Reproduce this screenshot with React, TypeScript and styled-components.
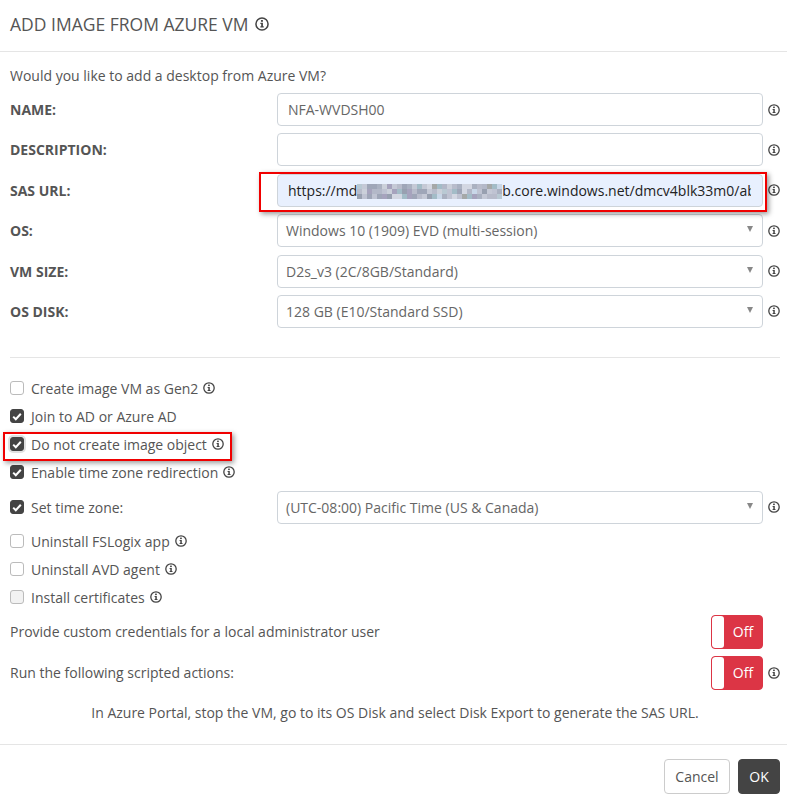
import React from "react";
import styled, { createGlobalStyle } from "styled-components";

const GlobalStyle = createGlobalStyle`
  html, body {
    margin: 0;
    padding: 0;
    background: #fff;
  }
  body {
    font-family: "Open Sans", "Liberation Sans", sans-serif;
    font-size: 14px;
    color: #555;
  }
`;

const Dialog = styled.div`
  position: relative;
  width: 787px;
  height: 806px;
  overflow: hidden;
  background: #fff;
`;

const Header = styled.div`
  height: 52px;
  box-sizing: border-box;
  padding: 0 0 3px 10px;
  display: flex;
  align-items: center;
  gap: 6px;
  border-bottom: 1px solid #e5e5e5;
  font-size: 17.5px;
  color: #555;
`;

const Body = styled.div`
  padding: 13px 7px 0 10px;
`;

const Intro = styled.div`
  height: 28px;
  line-height: 22px;
`;

const FieldRow = styled.div`
  height: 40.4px;
  display: grid;
  grid-template-columns: 267px 486px 23px;
  align-items: start;
`;

const FieldLabel = styled.div`
  height: 33px;
  display: flex;
  align-items: center;
  font-weight: 700;
  color: #555;
`;

const TextBox = styled.div<{ $active?: boolean }>`
  height: 33px;
  box-sizing: border-box;
  padding: 0 11px 0 10px;
  display: flex;
  align-items: center;
  border: 1px solid #ced4da;
  border-radius: 4px;
  background: ${(p) => (p.$active ? "#e8f0fe" : "#fff")};
  color: ${(p) => (p.$active ? "#222" : "#666")};
`;

const TextClip = styled.span`
  flex: 1;
  min-width: 0;
  display: flex;
  align-items: center;
  white-space: nowrap;
  overflow: hidden;
`;

const Mosaic = styled.span`
  display: inline-grid;
  flex: none;
  grid-auto-flow: column;
  grid-template-rows: repeat(3, 5px);
  grid-auto-columns: 5px;
  margin-top: 2px;
`;

const MosaicCell = styled.span<{ $color: string }>`
  background: ${(p) => p.$color};
`;

const SelectBox = styled.div`
  height: 33px;
  box-sizing: border-box;
  padding: 0 8px;
  display: flex;
  align-items: center;
  justify-content: space-between;
  border: 1px solid #ced4da;
  border-radius: 4px;
  background: #fff;
  color: #666;
`;

const Caret = styled.span`
  width: 0;
  height: 0;
  margin: 0 1px 3px 0;
  border-left: 3.5px solid transparent;
  border-right: 3.5px solid transparent;
  border-top: 6px solid #888;
`;

const IconCell = styled.div`
  height: 33px;
  padding-left: 5px;
  display: flex;
  align-items: center;
`;

const Divider = styled.div`
  height: 1px;
  background: #e5e5e5;
  margin: 22px 0 16px;
`;

const CheckRow = styled.div<{ $height?: number }>`
  height: ${(p) => p.$height ?? 28}px;
  display: flex;
  align-items: center;
  gap: 7px;
`;

const CheckRowField = styled.div`
  height: 40px;
  margin-top: 1px;
  display: grid;
  grid-template-columns: 267px 486px 23px;
  align-items: center;
`;

const CheckLabel = styled.span`
  display: inline-flex;
  align-items: center;
  gap: 5px;
`;

const CheckBox = styled.span<{ $checked?: boolean; $disabled?: boolean; $focused?: boolean }>`
  width: 14px;
  height: 14px;
  flex: none;
  box-sizing: border-box;
  display: inline-flex;
  align-items: center;
  justify-content: center;
  border-radius: 3px;
  border: 1px solid ${(p) => (p.$checked ? "#444" : "#bbb")};
  background: ${(p) => (p.$checked ? "#444" : p.$disabled ? "#f2f2f2" : "#fff")};
  box-shadow: ${(p) => (p.$focused ? "0 0 0 2px rgba(0, 0, 0, 0.12)" : "none")};
`;

const ToggleRow = styled.div`
  height: 41px;
  display: grid;
  grid-template-columns: 701px 52px 23px;
  align-items: center;
`;

const Toggle = styled.div`
  width: 52px;
  height: 34px;
  box-sizing: border-box;
  display: flex;
  border: 1px solid #dc3545;
  border-radius: 4px;
  background: #dc3545;
  overflow: hidden;
`;

const ToggleKnob = styled.span`
  width: 12px;
  background: #fff;
  border-radius: 3px;
`;

const ToggleText = styled.span`
  flex: 1;
  display: flex;
  align-items: center;
  justify-content: center;
  color: #fff;
`;

const Note = styled.div`
  height: 39px;
  display: flex;
  align-items: center;
  justify-content: center;
`;

const Footer = styled.div`
  position: absolute;
  left: 0;
  right: 0;
  top: 744px;
  padding: 14px 7px 0 0;
  display: flex;
  justify-content: flex-end;
  gap: 8px;
  border-top: 1px solid #e5e5e5;
`;

const Button = styled.button<{ $primary?: boolean }>`
  width: ${(p) => (p.$primary ? 42 : 66)}px;
  height: 35px;
  padding: 0;
  border: 1px solid ${(p) => (p.$primary ? "#444" : "#ccc")};
  border-radius: 4px;
  background: ${(p) => (p.$primary ? "#444" : "#fff")};
  color: ${(p) => (p.$primary ? "#fff" : "#555")};
  font: inherit;
`;

const Callout = styled.div<{ $x: number; $y: number; $w: number; $h: number }>`
  position: absolute;
  left: ${(p) => p.$x}px;
  top: ${(p) => p.$y}px;
  width: ${(p) => p.$w}px;
  height: ${(p) => p.$h}px;
  box-sizing: border-box;
  border: 2px solid #f00000;
  box-shadow: 2px 2px 5px rgba(0, 0, 0, 0.4);
  pointer-events: none;
`;

function InfoIcon({ size = 12 }: { size?: number }) {
  return (
    <svg width={size} height={size} viewBox="0 0 12 12" style={{ flex: "none" }}>
      <circle cx="6" cy="6" r="5.2" fill="none" stroke="#444" strokeWidth="1.3" />
      <rect x="5.1" y="2.6" width="1.7" height="1.5" fill="#444" />
      <path d="M4.6 5h2.2v2.9h.7v1H4.6v-1h.7V6h-.7z" fill="#444" />
    </svg>
  );
}

function CheckMark() {
  return (
    <svg width="10" height="9" viewBox="0 0 10 9">
      <path d="M1.2 4.6 3.8 7.2 8.8 1.8" fill="none" stroke="#fff" strokeWidth="2" />
    </svg>
  );
}

const blurPalette = [
  "#c5c9d6", "#aab1c1", "#9fa6b8", "#b9c9d3", "#a3bcc7", "#c9d7e8", "#bfc3d2",
  "#98a0b0", "#cbd0da", "#a6a3bd", "#b8bccb", "#d3d7e2", "#a5a8a8", "#b3b8c8",
];

// 3 rows x 29 columns of scrambled pixels hiding the storage account name
const blurCells = Array.from({ length: 87 }, (_, i) => {
  const noise = Math.abs(Math.sin((i + 1) * 12.9898) * 43758.5453);
  return blurPalette[Math.floor(noise) % blurPalette.length];
});

const fields = [
  { label: "NAME:", value: "NFA-WVDSH00" },
  { label: "DESCRIPTION:", value: "" },
];

const selects = [
  { label: "OS:", value: "Windows 10 (1909) EVD (multi-session)" },
  { label: "VM SIZE:", value: "D2s_v3 (2C/8GB/Standard)" },
  { label: "OS DISK:", value: "128 GB (E10/Standard SSD)" },
];

const topChecks = [
  { label: "Create image VM as Gen2", checked: false, info: true, focused: false },
  { label: "Join to AD or Azure AD", checked: true, info: false, focused: false },
  { label: "Do not create image object", checked: true, info: true, focused: true },
  { label: "Enable time zone redirection", checked: true, info: true, focused: false },
];

const bottomChecks = [
  { label: "Uninstall FSLogix app", disabled: false },
  { label: "Uninstall AVD agent", disabled: false },
  { label: "Install certificates", disabled: true },
];

export default function App() {
  return (
    <Dialog>
      <GlobalStyle />
      <Header>
        ADD IMAGE FROM AZURE VM <InfoIcon size={14} />
      </Header>
      <Body>
        <Intro>Would you like to add a desktop from Azure VM?</Intro>
        {fields.map((f) => (
          <FieldRow key={f.label}>
            <FieldLabel>{f.label}</FieldLabel>
            <TextBox>{f.value}</TextBox>
            <IconCell>
              <InfoIcon />
            </IconCell>
          </FieldRow>
        ))}
        <FieldRow>
          <FieldLabel>SAS URL:</FieldLabel>
          <TextBox $active>
            <TextClip>
              https://md
              <Mosaic>
                {blurCells.map((c, i) => (
                  <MosaicCell key={i} $color={c} />
                ))}
              </Mosaic>
              b.core.windows.net/dmcv4blk33m0/ab
            </TextClip>
          </TextBox>
          <IconCell>
            <InfoIcon />
          </IconCell>
        </FieldRow>
        {selects.map((s) => (
          <FieldRow key={s.label}>
            <FieldLabel>{s.label}</FieldLabel>
            <SelectBox>
              {s.value}
              <Caret />
            </SelectBox>
            <IconCell>
              <InfoIcon />
            </IconCell>
          </FieldRow>
        ))}
        <Divider />
        {topChecks.map((c) => (
          <CheckRow key={c.label}>
            <CheckBox $checked={c.checked} $focused={c.focused}>
              {c.checked && <CheckMark />}
            </CheckBox>
            <CheckLabel>
              {c.label}
              {c.info && <InfoIcon />}
            </CheckLabel>
          </CheckRow>
        ))}
        <CheckRowField>
          <CheckRow $height={33}>
            <CheckBox $checked>
              <CheckMark />
            </CheckBox>
            <CheckLabel>Set time zone:</CheckLabel>
          </CheckRow>
          <SelectBox>
            (UTC-08:00) Pacific Time (US &amp; Canada)
            <Caret />
          </SelectBox>
          <IconCell>
            <InfoIcon />
          </IconCell>
        </CheckRowField>
        {bottomChecks.map((c) => (
          <CheckRow key={c.label}>
            <CheckBox $disabled={c.disabled} />
            <CheckLabel>
              {c.label}
              <InfoIcon />
            </CheckLabel>
          </CheckRow>
        ))}
        <ToggleRow>
          Provide custom credentials for a local administrator user
          <Toggle>
            <ToggleKnob />
            <ToggleText>Off</ToggleText>
          </Toggle>
        </ToggleRow>
        <ToggleRow>
          Run the following scripted actions:
          <Toggle>
            <ToggleKnob />
            <ToggleText>Off</ToggleText>
          </Toggle>
          <IconCell>
            <InfoIcon />
          </IconCell>
        </ToggleRow>
        <Note>In Azure Portal, stop the VM, go to its OS Disk and select Disk Export to generate the SAS URL.</Note>
      </Body>
      <Footer>
        <Button>Cancel</Button>
        <Button $primary>OK</Button>
      </Footer>
      <Callout $x={259} $y={172} $w={508} $h={40} />
      <Callout $x={3} $y={432} $w={229} $h={29} />
    </Dialog>
  );
}
